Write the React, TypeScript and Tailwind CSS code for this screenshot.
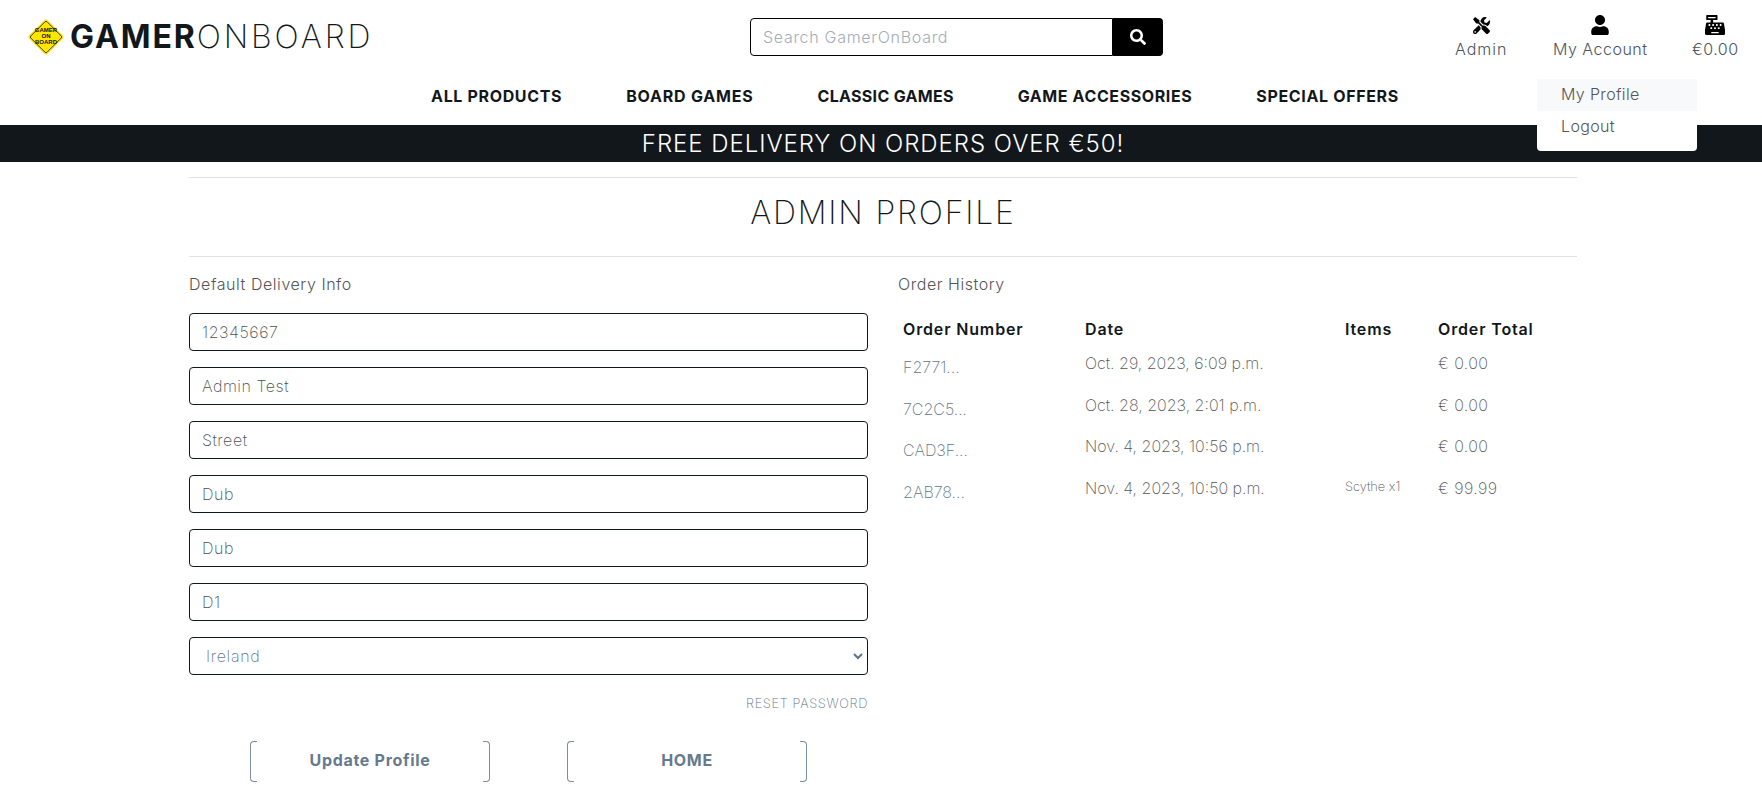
import { FaCashRegister, FaSearch, FaTools, FaUser } from 'react-icons/fa';

const font = "font-['Inter','Open_Sans',sans-serif]";

const navLinks = [
  { label: 'ALL PRODUCTS', spacing: 'tracking-[0.65px]' },
  { label: 'BOARD GAMES', spacing: 'tracking-[0.8px]' },
  { label: 'CLASSIC GAMES', spacing: 'tracking-[0.3px]' },
  { label: 'GAME ACCESSORIES', spacing: 'tracking-[0.6px]' },
  { label: 'SPECIAL OFFERS', spacing: 'tracking-[0.65px]' },
];
const fields = ['12345667', 'Admin Test', 'Street', 'Dub', 'Dub', 'D1'];
const orders = [
  { id: 'F2771...', date: 'Oct. 29, 2023, 6:09 p.m.', items: '', total: '€ 0.00' },
  { id: '7C2C5...', date: 'Oct. 28, 2023, 2:01 p.m.', items: '', total: '€ 0.00' },
  { id: 'CAD3F...', date: 'Nov. 4, 2023, 10:56 p.m.', items: '', total: '€ 0.00' },
  { id: '2AB78...', date: 'Nov. 4, 2023, 10:50 p.m.', items: 'Scythe x1', total: '€ 99.99' },
];

function Logo() {
  return (
    <div className="flex items-center">
      <svg width="38" height="38" viewBox="0 0 38 38" className="ml-[27px]">
        <rect x="6" y="6" width="26" height="26" rx="2" transform="rotate(45 19 19)" fill="#ffe600" />
        <rect x="7.5" y="7.5" width="23" height="23" rx="1.5" transform="rotate(45 19 19)" fill="none" stroke="#222" strokeWidth="0.8" />
        <text x="19" y="14" textAnchor="middle" fontSize="6" fontWeight="700" fontFamily="Liberation Sans" fill="#111">GAMER</text>
        <text x="19" y="20" textAnchor="middle" fontSize="6" fontWeight="700" fontFamily="Liberation Sans" fill="#111">ON</text>
        <text x="19" y="26" textAnchor="middle" fontSize="6" fontWeight="700" fontFamily="Liberation Sans" fill="#111">BOARD</text>
      </svg>
      <div className="ml-[5px] text-[32px] leading-none text-[#12171a]">
        <span className="font-bold tracking-[1.9px]">GAMER</span>
        <span className="font-extralight tracking-[2.9px]">ONBOARD</span>
      </div>
    </div>
  );
}

function HeaderLink({ icon, label, className, spacing }: { icon: React.ReactNode; label: string; className: string; spacing: string }) {
  return (
    <div className={`absolute top-[14px] flex flex-col items-center ${className}`}>
      <div className="flex h-[22px] items-center text-black">{icon}</div>
      <span className={`mt-[1px] text-[16px] font-light leading-[24px] text-[#4a5560] whitespace-nowrap ${spacing}`}>{label}</span>
    </div>
  );
}

function Bracket({ label, className }: { label: string; className: string }) {
  return (
    <div className={`relative flex h-[41px] w-[240px] items-center justify-center text-[16px] font-bold tracking-[0.7px] text-[#667a8f] ${className}`}>
      <span className="absolute inset-y-0 left-0 w-[7px] rounded-l-[4px] border-y border-l border-[#7b8ea3]" />
      <span className="absolute inset-y-0 right-0 w-[7px] rounded-r-[4px] border-y border-r border-[#7b8ea3]" />
      {label}
    </div>
  );
}

export default function App() {
  return (
    <div className={`${font} relative h-[807px] w-full overflow-hidden bg-white text-[#555]`}>
      {/* Header */}
      <header className="relative h-[125px]">
        <div className="flex h-[75px] items-center pb-[1px]">
          <Logo />
        </div>
        <div className="absolute left-[750px] top-[18px] flex h-[38px] w-[413px]">
          <div className="flex flex-1 items-center rounded-l-[4px] border border-black pl-[12px] text-[16px] font-light tracking-[0.7px] text-[#a3adb8]">
            Search GamerOnBoard
          </div>
          <div className="flex w-[50px] items-center justify-center rounded-r-[4px] bg-black text-[16px] text-white">
            <FaSearch />
          </div>
        </div>
        <HeaderLink className="left-[1455px]" icon={<FaTools size={17} />} label="Admin" spacing="tracking-[1px]" />
        <HeaderLink className="left-[1553px]" icon={<FaUser size={20} />} label="My Account" spacing="tracking-[0.5px]" />
        <HeaderLink className="left-[1692px]" icon={<FaCashRegister size={20} />} label="€0.00" spacing="tracking-[0.5px]" />
        <nav className="flex justify-center gap-[64px] pl-[68px] pt-[9px]">
          {navLinks.map((link) => (
            <span key={link.label} className={`text-[16px] font-bold leading-[24px] text-[#12171a] whitespace-nowrap ${link.spacing}`}>
              {link.label}
            </span>
          ))}
        </nav>
      </header>

      {/* Delivery banner */}
      <div className="flex h-[37px] items-center justify-center bg-[#12171b] pl-[4px] text-[24px] font-light leading-none tracking-[0.95px] text-white">
        FREE DELIVERY ON ORDERS OVER €50!
      </div>

      {/* Account dropdown */}
      <div className="absolute left-[1537px] top-[79px] w-[160px] rounded-b-[4px] bg-white pb-[8px] text-[16px] font-light tracking-[0.35px] text-[#555]">
        <div className="h-[32px] bg-[#f8f9fa] pl-[24px] leading-[30px]">My Profile</div>
        <div className="h-[32px] pl-[24px] leading-[30px]">Logout</div>
      </div>

      {/* Page body */}
      <main className="ml-[189px] w-[1388px] pt-[15px]">
        <div className="border-t border-[#dee2e6]" />
        <h1 className="flex h-[78px] items-center justify-center pb-[8px] text-[32px] font-extralight leading-none tracking-[1.8px] text-[#12171a]">
          ADMIN PROFILE
        </h1>
        <div className="border-t border-[#dee2e6]" />

        <div className="mt-[15px] grid grid-cols-[679px_1fr] gap-x-[30px]">
          <section>
            <p className="h-[24px] text-[16px] font-light leading-[24px] tracking-[0.55px]">Default Delivery Info</p>
            <div className="mt-[17px] flex flex-col gap-[16px]">
              {fields.map((value, idx) => (
                <div
                  key={idx}
                  className="flex h-[38px] items-center rounded-[4px] border border-[#12171a] pl-[12px] text-[16px] font-extralight tracking-[0.55px] text-[#495057]"
                >
                  {value}
                </div>
              ))}
              <div className="flex h-[38px] items-center justify-between rounded-[4px] border border-[#12171a] pl-[16px] pr-[4px] text-[16px] font-extralight tracking-[0.7px] text-[#5f7388]">
                Ireland
                <svg width="10" height="8" viewBox="0 0 10 8" fill="none" stroke="#5f7388" strokeWidth="2">
                  <path d="M1 2l4 4 4-4" />
                </svg>
              </div>
            </div>
            <p className="mt-[20px] text-right text-[12.8px] font-extralight leading-[18px] tracking-[0.65px] text-[#5f7388]">RESET PASSWORD</p>
            <div className="mt-[28px] flex gap-[77px] pl-[61px]">
              <Bracket label="Update Profile" className="pb-[3px]" />
              <Bracket label="HOME" className="pb-[3px]" />
            </div>
          </section>

          <section>
            <p className="h-[24px] text-[16px] font-light leading-[24px] tracking-[0.55px]">Order History</p>
            <div className="mt-[21px] grid grid-cols-[182px_260px_93px_1fr] pl-[5px]">
              {['Order Number', 'Date', 'Items', 'Order Total'].map((heading) => (
                <span key={heading} className="h-[33px] text-[16px] font-semibold leading-[24px] tracking-[0.85px] text-[#12171a] whitespace-nowrap">
                  {heading}
                </span>
              ))}
              {orders.map((order) => (
                <div key={order.id} className="col-span-4 grid h-[41.7px] grid-cols-subgrid items-start pt-[1px]">
                  <span className="pt-[4px] text-[16px] font-extralight leading-[24px] text-[#5f7388]">{order.id}</span>
                  <span className="text-[16px] font-extralight leading-[24px] whitespace-nowrap">{order.date}</span>
                  <span className="text-[12.8px] font-extralight leading-[22px] whitespace-nowrap">{order.items}</span>
                  <span className="text-[16px] font-extralight leading-[24px] tracking-[0.4px]">{order.total}</span>
                </div>
              ))}
            </div>
          </section>
        </div>
      </main>
    </div>
  );
}
